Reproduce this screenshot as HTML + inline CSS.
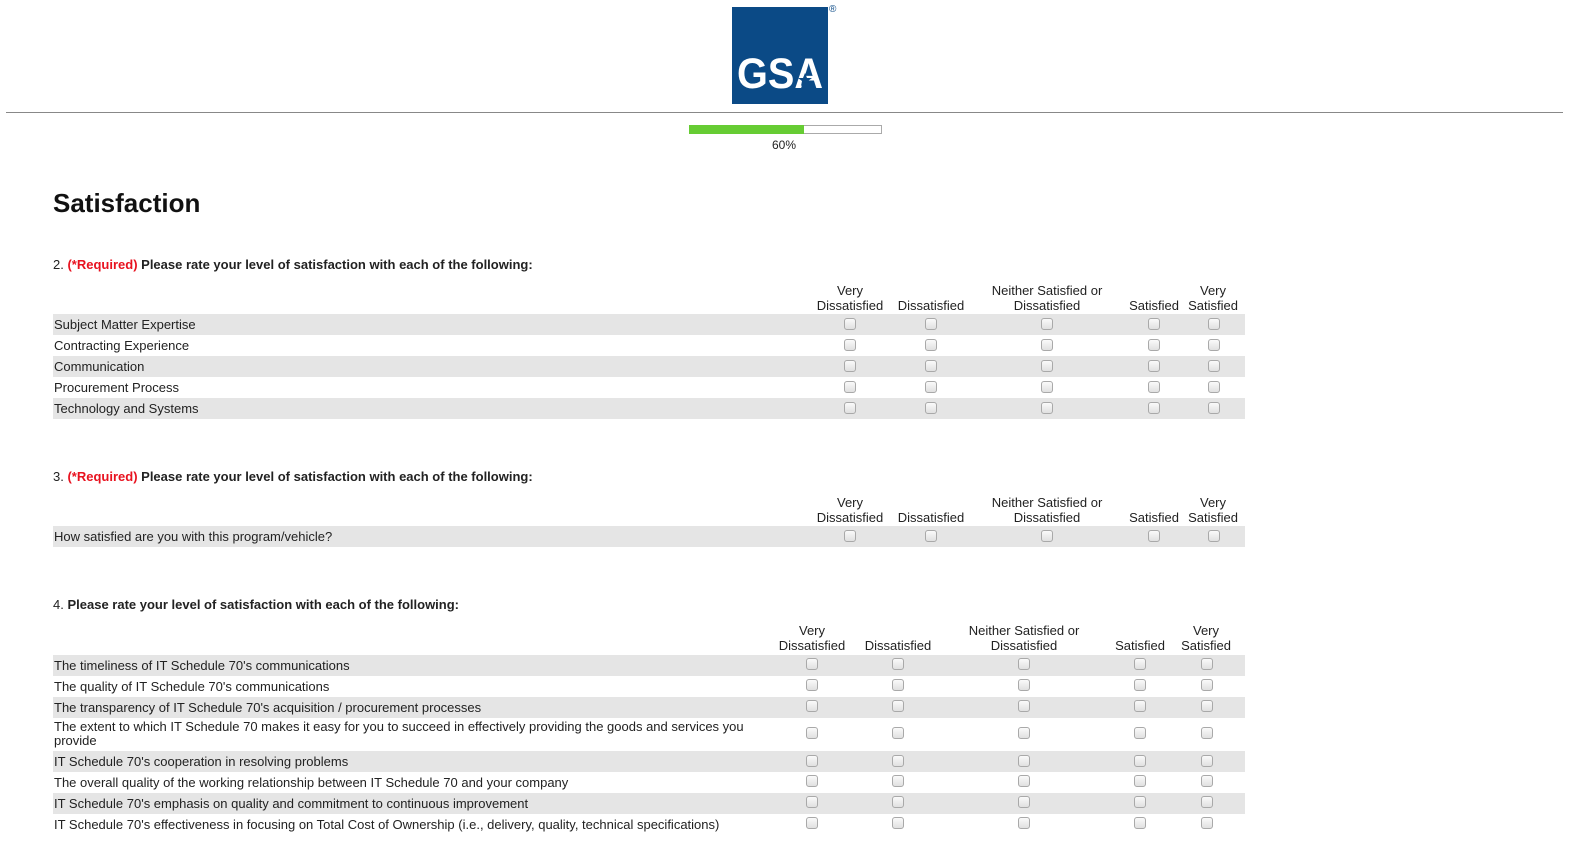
<!DOCTYPE html>
<html><head><meta charset="utf-8"><style>
*{margin:0;padding:0;box-sizing:border-box}
body{width:1577px;height:846px;background:#fff;font-family:"Liberation Sans",Arial,sans-serif;color:#222;position:relative;overflow:hidden;font-size:13px}
.a{position:absolute;white-space:nowrap}
.r{position:absolute;left:53px;width:1192px;height:21px;line-height:21px;padding-left:1px;font-size:13px;color:#222}
.g{background:#e5e5e5}
.c{position:absolute;width:12px;height:12px;border:1px solid #a9a9a9;border-radius:3px;background:linear-gradient(#fafafa,#e0e0e0)}
.h{position:absolute;text-align:center;font-size:13px;line-height:15px;color:#222;white-space:nowrap;transform:translateX(-50%)}
.q{position:absolute;left:53px;font-size:13px;font-weight:bold;color:#222}
.q span.n{font-weight:normal}
.q span.req{color:#e8121f;font-weight:bold}
</style></head><body>
<div class="a" style="left:732px;top:7px;width:96px;height:97px;background:#0b4a86"></div>
<svg class="a" style="left:732px;top:7px" width="96" height="97">
<text x="5" y="81" font-family="Liberation Sans,Arial,sans-serif" font-weight="bold" font-size="43" fill="#fff" textLength="86" lengthAdjust="spacingAndGlyphs">GSA</text>
<polygon points="73,66 75,71 80,71 76,74 78,79 73,76 69,79 70,74 66,71 71,71" fill="#0b4a86"/>
</svg>
<div class="a" style="left:829px;top:4px;font-size:10px;color:#0b4a86">®</div>
<div class="a" style="left:6px;top:112px;width:1557px;height:1px;background:#888"></div>
<div class="a" style="left:689px;top:125px;width:193px;height:9px;border:1px solid #aaa"></div>
<div class="a" style="left:689px;top:125px;width:115px;height:9px;background:#66cc33"></div>
<div class="a" style="left:772px;top:138px;font-size:12px;color:#222">60%</div>
<div class="a" style="left:53px;top:188px;font-size:26px;font-weight:bold;color:#111">Satisfaction</div>

<div class="q" style="top:257px"><span class="n">2. </span><span class="req">(*Required)</span> Please rate your level of satisfaction with each of the following:</div>
<div class="h" style="left:850px;top:283px">Very<br>Dissatisfied</div>
<div class="h" style="left:931px;top:298px">Dissatisfied</div>
<div class="h" style="left:1047px;top:283px">Neither Satisfied or<br>Dissatisfied</div>
<div class="h" style="left:1154px;top:298px">Satisfied</div>
<div class="h" style="left:1213px;top:283px">Very<br>Satisfied</div>
<div class="r g" style="top:314px">Subject Matter Expertise</div>
<div class="r" style="top:335px">Contracting Experience</div>
<div class="r g" style="top:356px">Communication</div>
<div class="r" style="top:377px">Procurement Process</div>
<div class="r g" style="top:398px">Technology and Systems</div>

<div class="q" style="top:469px"><span class="n">3. </span><span class="req">(*Required)</span> Please rate your level of satisfaction with each of the following:</div>
<div class="h" style="left:850px;top:495px">Very<br>Dissatisfied</div>
<div class="h" style="left:931px;top:510px">Dissatisfied</div>
<div class="h" style="left:1047px;top:495px">Neither Satisfied or<br>Dissatisfied</div>
<div class="h" style="left:1154px;top:510px">Satisfied</div>
<div class="h" style="left:1213px;top:495px">Very<br>Satisfied</div>
<div class="r g" style="top:526px">How satisfied are you with this program/vehicle?</div>

<div class="q" style="top:597px"><span class="n">4. </span>Please rate your level of satisfaction with each of the following:</div>
<div class="h" style="left:812px;top:623px">Very<br>Dissatisfied</div>
<div class="h" style="left:898px;top:638px">Dissatisfied</div>
<div class="h" style="left:1024px;top:623px">Neither Satisfied or<br>Dissatisfied</div>
<div class="h" style="left:1140px;top:638px">Satisfied</div>
<div class="h" style="left:1206px;top:623px">Very<br>Satisfied</div>
<div class="r g" style="top:655px">The timeliness of IT Schedule 70's communications</div>
<div class="r" style="top:676px">The quality of IT Schedule 70's communications</div>
<div class="r g" style="top:697px">The transparency of IT Schedule 70's acquisition / procurement processes</div>
<div class="r" style="top:718px;height:33px;line-height:14px;padding-top:2px;white-space:normal"><div style="width:705px">The extent to which IT Schedule 70 makes it easy for you to succeed in effectively providing the goods and services you provide</div></div>
<div class="r g" style="top:751px">IT Schedule 70's cooperation in resolving problems</div>
<div class="r" style="top:772px">The overall quality of the working relationship between IT Schedule 70 and your company</div>
<div class="r g" style="top:793px">IT Schedule 70's emphasis on quality and commitment to continuous improvement</div>
<div class="r" style="top:814px">IT Schedule 70's effectiveness in focusing on Total Cost of Ownership (i.e., delivery, quality, technical specifications)</div>

<i class="c" style="left:844px;top:318px"></i><i class="c" style="left:925px;top:318px"></i><i class="c" style="left:1041px;top:318px"></i><i class="c" style="left:1148px;top:318px"></i><i class="c" style="left:1208px;top:318px"></i>
<i class="c" style="left:844px;top:339px"></i><i class="c" style="left:925px;top:339px"></i><i class="c" style="left:1041px;top:339px"></i><i class="c" style="left:1148px;top:339px"></i><i class="c" style="left:1208px;top:339px"></i>
<i class="c" style="left:844px;top:360px"></i><i class="c" style="left:925px;top:360px"></i><i class="c" style="left:1041px;top:360px"></i><i class="c" style="left:1148px;top:360px"></i><i class="c" style="left:1208px;top:360px"></i>
<i class="c" style="left:844px;top:381px"></i><i class="c" style="left:925px;top:381px"></i><i class="c" style="left:1041px;top:381px"></i><i class="c" style="left:1148px;top:381px"></i><i class="c" style="left:1208px;top:381px"></i>
<i class="c" style="left:844px;top:402px"></i><i class="c" style="left:925px;top:402px"></i><i class="c" style="left:1041px;top:402px"></i><i class="c" style="left:1148px;top:402px"></i><i class="c" style="left:1208px;top:402px"></i>
<i class="c" style="left:844px;top:530px"></i><i class="c" style="left:925px;top:530px"></i><i class="c" style="left:1041px;top:530px"></i><i class="c" style="left:1148px;top:530px"></i><i class="c" style="left:1208px;top:530px"></i>
<i class="c" style="left:806px;top:658px"></i><i class="c" style="left:892px;top:658px"></i><i class="c" style="left:1018px;top:658px"></i><i class="c" style="left:1134px;top:658px"></i><i class="c" style="left:1201px;top:658px"></i>
<i class="c" style="left:806px;top:679px"></i><i class="c" style="left:892px;top:679px"></i><i class="c" style="left:1018px;top:679px"></i><i class="c" style="left:1134px;top:679px"></i><i class="c" style="left:1201px;top:679px"></i>
<i class="c" style="left:806px;top:700px"></i><i class="c" style="left:892px;top:700px"></i><i class="c" style="left:1018px;top:700px"></i><i class="c" style="left:1134px;top:700px"></i><i class="c" style="left:1201px;top:700px"></i>
<i class="c" style="left:806px;top:727px"></i><i class="c" style="left:892px;top:727px"></i><i class="c" style="left:1018px;top:727px"></i><i class="c" style="left:1134px;top:727px"></i><i class="c" style="left:1201px;top:727px"></i>
<i class="c" style="left:806px;top:755px"></i><i class="c" style="left:892px;top:755px"></i><i class="c" style="left:1018px;top:755px"></i><i class="c" style="left:1134px;top:755px"></i><i class="c" style="left:1201px;top:755px"></i>
<i class="c" style="left:806px;top:775px"></i><i class="c" style="left:892px;top:775px"></i><i class="c" style="left:1018px;top:775px"></i><i class="c" style="left:1134px;top:775px"></i><i class="c" style="left:1201px;top:775px"></i>
<i class="c" style="left:806px;top:796px"></i><i class="c" style="left:892px;top:796px"></i><i class="c" style="left:1018px;top:796px"></i><i class="c" style="left:1134px;top:796px"></i><i class="c" style="left:1201px;top:796px"></i>
<i class="c" style="left:806px;top:817px"></i><i class="c" style="left:892px;top:817px"></i><i class="c" style="left:1018px;top:817px"></i><i class="c" style="left:1134px;top:817px"></i><i class="c" style="left:1201px;top:817px"></i>
</body></html>
